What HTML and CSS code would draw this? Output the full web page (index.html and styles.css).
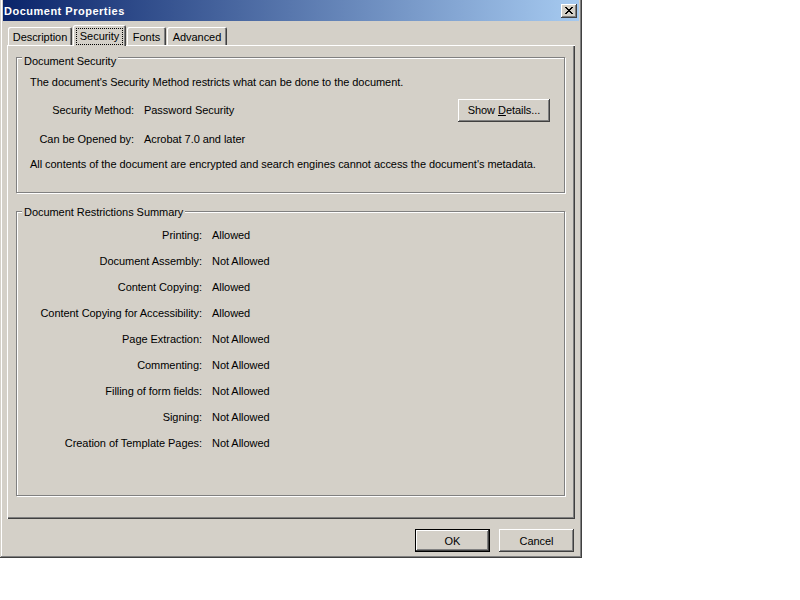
FILE: index.html
```html
<!DOCTYPE html>
<html lang="en">

<head>
    <meta charset="UTF-8">
    <title>Document Properties</title>
    <link rel="stylesheet" href="styles.css">
</head>

<body>

    <div class="window">
        <div class="titlebar">
            <span class="title">Document Properties</span>
            <div class="close-btn">
                <svg width="8" height="7" viewBox="0 0 8 7" shape-rendering="crispEdges">
                    <path d="M0 0h2v1H0zM6 0h2v1H6zM1 1h2v1H1zM5 1h2v1H5zM2 2h4v1H2zM3 3h2v1H3zM2 4h4v1H2zM1 5h2v1H1zM5 5h2v1H5zM0 6h2v1H0zM6 6h2v1H6z" fill="#000"/>
                </svg>
            </div>
        </div>

        <div class="tabs">
            <div class="tab tab-description">Description</div>
            <div class="tab tab-security active"><span class="focus">Security</span></div>
            <div class="tab tab-fonts">Fonts</div>
            <div class="tab tab-advanced">Advanced</div>
        </div>

        <div class="panel">
            <div class="group group-security">
                <div class="legend">Document Security</div>
                <div class="intro">The document's Security Method restricts what can be done to the document.</div>
                <div class="sec-row first">
                    <span class="sec-label">Security Method:</span>
                    <span>Password Security</span>
                    <div class="btn details-btn"><span>Show <u>D</u>etails...</span></div>
                </div>
                <div class="sec-row">
                    <span class="sec-label">Can be Opened by:</span>
                    <span>Acrobat 7.0 and later</span>
                </div>
                <div class="note">All contents of the document are encrypted and search engines cannot access the document's metadata.</div>
            </div>

            <div class="group group-restrictions">
                <div class="legend">Document Restrictions Summary</div>
                <div class="summary">
                    <span class="sum-label">Printing:</span><span>Allowed</span>
                    <span class="sum-label">Document Assembly:</span><span>Not Allowed</span>
                    <span class="sum-label">Content Copying:</span><span>Allowed</span>
                    <span class="sum-label">Content Copying for Accessibility:</span><span>Allowed</span>
                    <span class="sum-label">Page Extraction:</span><span>Not Allowed</span>
                    <span class="sum-label">Commenting:</span><span>Not Allowed</span>
                    <span class="sum-label">Filling of form fields:</span><span>Not Allowed</span>
                    <span class="sum-label">Signing:</span><span>Not Allowed</span>
                    <span class="sum-label">Creation of Template Pages:</span><span>Not Allowed</span>
                </div>
            </div>
        </div>

        <div class="buttons">
            <div class="btn dialog-btn default">OK</div>
            <div class="btn dialog-btn">Cancel</div>
        </div>
    </div>

</body>

</html>
```

FILE: styles.css
```css
body {
    margin: 0;
    padding: 0;
    background-color: #ffffff;
    font-family: 'Liberation Sans', Arial, sans-serif;
    font-size: 11px;
    letter-spacing: -0.05px;
    color: #000000;
}

.window {
    width: 582px;
    height: 558px;
    box-sizing: border-box;
    padding: 0 3px 3px 3px;
    background-color: #d4d0c8;
    box-shadow: inset -1px -1px #404040, inset 1px 0 #d4d0c8, inset -2px -2px #808080, inset 2px 0 #ffffff;
}

.titlebar {
    height: 21px;
    display: flex;
    align-items: center;
    padding-left: 1px;
    background: linear-gradient(to right, #0a246a, #a6caf0);
}

.title {
    color: #ffffff;
    font-weight: bold;
    letter-spacing: 0.5px;
    flex: 1;
}

.close-btn {
    width: 16px;
    height: 14px;
    box-sizing: border-box;
    margin-right: 2px;
    display: flex;
    align-items: center;
    justify-content: center;
    background-color: #d4d0c8;
    box-shadow: inset -1px -1px #404040, inset 1px 1px #ffffff, inset -2px -2px #808080;
}

/* tabs */
.tabs {
    display: flex;
    align-items: flex-end;
    height: 21px;
    margin: 4px 0 -1px 5px;
    position: relative;
    z-index: 1;
}

.tab {
    height: 18px;
    box-sizing: border-box;
    margin-bottom: 1px;
    padding-top: 4px;
    line-height: 13px;
    text-align: center;
    background-color: #d4d0c8;
    border-radius: 2px 2px 0 0;
    box-shadow: inset 1px 1px #ffffff, inset -1px 0 #404040, inset -2px 0 #808080;
}

.tab-description { width: 64px; }
.tab-security { width: 53px; margin-left: 1px; }
.tab-fonts { width: 39px; margin-left: 1px; }
.tab-advanced { width: 60px; margin-left: 1px; }

.tab.active {
    height: 21px;
    margin-bottom: 0;
    padding-top: 3px;
}

.focus {
    display: inline-block;
    padding: 1px 3px;
    border: 1px dotted #000000;
}

/* panel */
.panel {
    width: 568px;
    height: 474px;
    box-sizing: border-box;
    margin-left: 4px;
    padding: 12px 0 0 9px;
    box-shadow: inset 1px 1px #ffffff, inset -1px -1px #404040, inset -2px -2px #808080;
}

.group {
    width: 549px;
    box-sizing: border-box;
    border: 1px solid #808080;
    box-shadow: inset 1px 1px #ffffff, 1px 1px #ffffff;
    line-height: 13px;
}

.group-security {
    height: 136px;
    padding: 0 14px 0 13px;
}

.group-restrictions {
    height: 285px;
    margin-top: 18px;
}

.legend {
    width: fit-content;
    margin: -3px 0 0 5px;
    padding: 0 2px;
    background-color: #d4d0c8;
}

.group-security .legend {
    margin-left: -8px;
}

.group-restrictions .legend {
    margin-top: -6px;
    margin-bottom: 3px;
}

.intro {
    margin-top: 8px;
}

.sec-row {
    display: flex;
    align-items: center;
    height: 23px;
    margin-top: 6px;
}

.sec-row.first {
    margin-top: 10px;
}

.sec-label {
    width: 104px;
    margin-right: 10px;
    text-align: right;
}

.note {
    margin-top: 7px;
}

.summary {
    display: grid;
    grid-template-columns: 185px auto;
    column-gap: 10px;
    line-height: 26px;
}

.sum-label {
    text-align: right;
}

/* buttons */
.btn {
    height: 23px;
    box-sizing: border-box;
    display: flex;
    align-items: center;
    justify-content: center;
    background-color: #d4d0c8;
    box-shadow: inset -1px -1px #404040, inset 1px 1px #ffffff, inset -2px -2px #808080;
}

.details-btn {
    width: 92px;
    margin-left: auto;
}

.buttons {
    display: flex;
    justify-content: flex-end;
    gap: 9px;
    margin-top: 10px;
    padding-right: 5px;
}

.dialog-btn {
    width: 75px;
}

.dialog-btn.default {
    border: 1px solid #000000;
}
```
